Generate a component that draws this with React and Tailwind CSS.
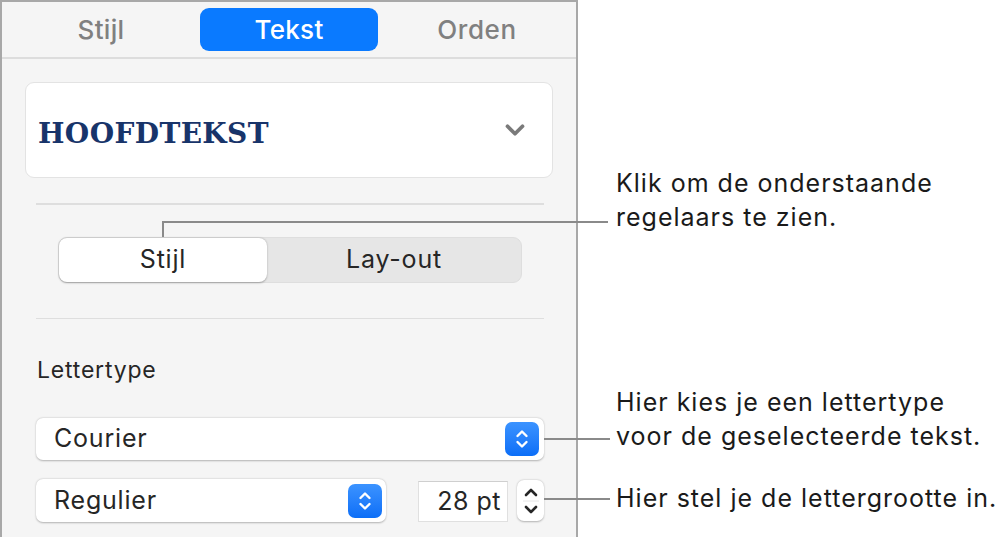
import { ChevronDown } from "lucide-react";

function BlueStepper({ className }) {
  return (
    <div className={`flex items-center justify-center rounded-[7px] bg-gradient-to-b from-[#3b93ff] to-[#0a6ef7] ${className}`}>
      <svg width="16" height="22" viewBox="0 0 16 22" fill="none" stroke="white" strokeWidth="2.4" strokeLinecap="round" strokeLinejoin="round">
        <path d="M3.5 8 L8 3.5 L12.5 8" />
        <path d="M3.5 14 L8 18.5 L12.5 14" />
      </svg>
    </div>
  );
}

function Popup({ label, width, children }) {
  return (
    <div className={`flex items-center justify-between h-[42px] ${width} bg-white rounded-[7px] shadow-[0_0.5px_2px_rgba(0,0,0,0.28)] pl-[18px] pr-[5px]`}>
      <span className="text-[25px] tracking-[0.8px] text-[#262626]">{label}</span>
      {children}
    </div>
  );
}

export default function App() {
  return (
    <div className="relative w-[1008px] h-[537px] bg-white flex overflow-hidden font-[Inter,'Noto_Sans',sans-serif]">
      {/* Inspector panel */}
      <div className="w-[578px] h-full shrink-0 border-2 border-b-0 border-[#a8a8a8] bg-[#f5f5f5] flex flex-col">
        {/* Tabs */}
        <div className="h-[55px] flex items-start pt-[6px] px-[5px]">
          <div className="w-[188px] h-[43px] flex items-center justify-center text-[26px] tracking-[0.3px] font-medium text-[#808080]">Stijl</div>
          <div className="w-[188px] h-[43px] px-[5px]">
            <div className="w-full h-full rounded-[9px] bg-[#0a7aff] flex items-center justify-center text-[26px] tracking-[0.3px] font-medium text-white">Tekst</div>
          </div>
          <div className="w-[188px] h-[43px] flex items-center justify-center text-[26px] tracking-[0.6px] font-medium text-[#808080]">Orden</div>
        </div>
        <div className="h-[2px] bg-[#dddddd]" />

        {/* Paragraph style */}
        <div className="mt-[23px] mx-[23px] h-[96px] bg-white rounded-[9px] border border-[#e3e3e3] flex items-center justify-between pl-[12px] pr-[22px]">
          <span className="mt-[7px] font-['DejaVu_Serif',serif] font-bold text-[28px] leading-[32px] text-[#18346a] tracking-[0.4px]">HOOFDTEKST</span>
          <ChevronDown className="w-[30px] h-[30px] text-[#7a7a7a]" strokeWidth={3} />
        </div>

        <div className="mt-[25px] ml-[34px] mr-[32px] h-[1.5px] bg-[#dedede]" />

        {/* Segmented control */}
        <div className="mt-[32px] ml-[56px] w-[464px] h-[46px] rounded-[9px] bg-[#e6e6e6] border border-[#dedede] flex">
          <div className="w-[208px] h-full rounded-[8px] bg-white shadow-[0_0.5px_2px_rgba(0,0,0,0.3)] flex items-center justify-center text-[25px] tracking-[0.8px] text-[#262626]">Stijl</div>
          <div className="flex-1 flex items-center justify-center text-[25px] tracking-[0.8px] text-[#262626]">Lay-out</div>
        </div>

        <div className="mt-[35px] ml-[34px] mr-[32px] h-[1.5px] bg-[#dedede]" />

        {/* Font */}
        <div className="mt-[37px] ml-[35px] h-[28px] leading-[28px] text-[23px] tracking-[0.8px] text-[#262626]">Lettertype</div>

        <div className="mt-[34px] ml-[34px]">
          <Popup label="Courier" width="w-[508px]">
            <BlueStepper className="w-[34px] h-[34px]" />
          </Popup>
        </div>

        <div className="mt-[19px] ml-[34px] flex items-start">
          <Popup label="Regulier" width="w-[350px] !h-[43px] !pr-[4px]">
            <BlueStepper className="w-[34px] h-[34px]" />
          </Popup>
          <div className="ml-[32px] mt-[2px] w-[90px] h-[41px] bg-white border border-[#e0e0e0] border-t-[#cfcfcf] flex items-center justify-end pr-[6px] text-[25px] tracking-[0.5px] text-[#262626]">28 pt</div>
          <div className="ml-[9px] mt-[1px] w-[27px] h-[41px] bg-white rounded-[7px] shadow-[0_0.5px_2px_rgba(0,0,0,0.28)] flex flex-col items-center justify-center">
            <svg width="16" height="34" viewBox="0 0 16 34" fill="none" stroke="#262626" strokeWidth="2.6" strokeLinecap="round" strokeLinejoin="round">
              <path d="M3 11 L8 6 L13 11" />
              <path d="M0 17 H16" stroke="#e6e6e6" strokeWidth="1" />
              <path d="M3 23 L8 28 L13 23" />
            </svg>
          </div>
        </div>
      </div>

      {/* Callouts */}
      <div className="flex-1 flex flex-col pl-[38px] text-[25px] tracking-[1px] leading-[34px] text-[#1a1a1a]">
        <div className="mt-[166px]">
          <div>Klik om de onderstaande</div>
          <div>regelaars te zien.</div>
        </div>
        <div className="mt-[151px]">
          <div>Hier kies je een lettertype</div>
          <div>voor de geselecteerde tekst.</div>
        </div>
        <div className="mt-[28px]">
          <div>Hier stel je de lettergrootte in.</div>
        </div>
      </div>

      {/* Callout lines */}
      <div className="absolute left-[162px] top-[221px] w-[2px] h-[16px] bg-[#8a8a8a]" />
      <div className="absolute left-[162px] top-[221px] w-[446px] h-[2px] bg-[#8a8a8a]" />
      <div className="absolute left-[544px] top-[438px] w-[66px] h-[2px] bg-[#8a8a8a]" />
      <div className="absolute left-[544px] top-[498px] w-[66px] h-[2px] bg-[#8a8a8a]" />
    </div>
  );
}
